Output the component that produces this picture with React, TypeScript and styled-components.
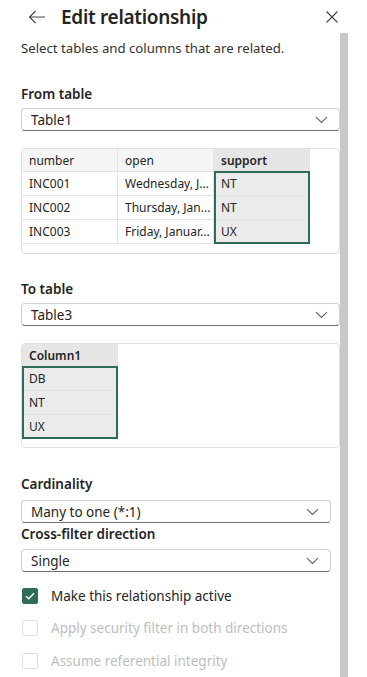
import styled, { createGlobalStyle } from 'styled-components';

const GlobalStyle = createGlobalStyle`
  html, body {
    margin: 0;
    background: #ffffff;
  }
  body {
    font-family: 'Noto Sans', 'Segoe UI', sans-serif;
    color: #242424;
  }
`;

const GREEN = '#2e6b59';

const Panel = styled.div`
  width: 367px;
  height: 677px;
  display: flex;
  flex-direction: column;
  overflow: hidden;
`;

const Header = styled.div`
  height: 33px;
  display: flex;
  align-items: center;
  padding: 0 29px 0 28px;
`;

const Title = styled.h1`
  flex: 1;
  margin: 0 0 0 15px;
  font-size: 19px;
  font-weight: 600;
  line-height: 26px;
  letter-spacing: -0.3px;
`;

const IconButton = styled.span`
  display: flex;
  align-items: center;
  color: #424242;
`;

const Main = styled.div`
  flex: 1;
  display: flex;
`;

const Content = styled.div`
  width: 319px;
  padding-left: 21px;
  display: flex;
  flex-direction: column;
`;

const Scrollbar = styled.div`
  width: 8px;
  background: #c8c8c8;
`;

const Description = styled.p`
  margin: 6px 0 0;
  font-size: 13.2px;
  line-height: 18px;
  color: #323232;
`;

const Label = styled.div<{ $top: number }>`
  margin-top: ${({ $top }) => $top}px;
  font-size: 13.5px;
  font-weight: 600;
  line-height: 18px;
`;

const Select = styled.div<{ $width?: number; $top?: number }>`
  box-sizing: border-box;
  width: ${({ $width }) => $width ?? 319}px;
  height: 23px;
  margin-top: ${({ $top }) => $top ?? 5}px;
  border: 1px solid #d1d1d1;
  border-bottom-color: #707070;
  border-radius: 4px;
  display: flex;
  align-items: center;
  justify-content: space-between;
  padding: 0 11px 0 9px;
  font-size: 13.5px;
  color: #242424;
`;

const Preview = styled.div<{ $top: number; $height: number }>`
  box-sizing: border-box;
  width: 319px;
  height: ${({ $height }) => $height}px;
  margin-top: ${({ $top }) => $top}px;
  border: 1px solid #e0e0e0;
  border-radius: 4px;
  display: flex;
  align-items: flex-start;
  overflow: hidden;
`;

const Column = styled.div`
  width: 96px;
  display: flex;
  flex-direction: column;
`;

const HeadCell = styled.div<{ $selected?: boolean }>`
  box-sizing: border-box;
  height: 22px;
  display: flex;
  align-items: center;
  padding-left: 7px;
  font-size: 12px;
  font-weight: ${({ $selected }) => ($selected ? 600 : 400)};
  background: ${({ $selected }) => ($selected ? '#e6e6e6' : '#f5f5f5')};
  border-right: 1px solid #e3e3e3;
  color: #242424;
`;

const CellGroup = styled.div<{ $selected?: boolean }>`
  position: relative;
  display: flex;
  flex-direction: column;
  background: ${({ $selected }) => ($selected ? '#ebebeb' : '#ffffff')};
  border-right: 1px solid #e3e3e3;

  &::after {
    content: '';
    display: ${({ $selected }) => ($selected ? 'block' : 'none')};
    position: absolute;
    inset: 0 -1px 0 0;
    border: 2px solid ${GREEN};
    pointer-events: none;
  }
`;

const Cell = styled.div`
  box-sizing: border-box;
  height: 24px;
  display: flex;
  align-items: center;
  padding-left: 7px;
  font-size: 12px;
  color: #242424;
  white-space: nowrap;
  overflow: hidden;
  border-top: 1px solid #e3e3e3;
  &:last-child {
    height: 25px;
    border-bottom: 1px solid #e3e3e3;
  }
`;

const CheckRow = styled.label<{ $disabled?: boolean; $top: number }>`
  display: flex;
  align-items: center;
  gap: 13px;
  height: 16px;
  margin-top: ${({ $top }) => $top}px;
  padding-left: 1px;
  font-size: 13.5px;
  color: ${({ $disabled }) => ($disabled ? '#bdbdbd' : '#242424')};
`;

const Box = styled.span<{ $checked?: boolean }>`
  box-sizing: border-box;
  width: 16px;
  height: 16px;
  border-radius: 2px;
  display: flex;
  align-items: center;
  justify-content: center;
  background: ${({ $checked }) => ($checked ? GREEN : '#ffffff')};
  border: 1px solid ${({ $checked }) => ($checked ? GREEN : '#e0e0e0')};
`;

function Chevron() {
  return (
    <svg width='13' height='8' viewBox='0 0 13 8' fill='none'>
      <path d='M1 1.2L6.5 6.5L12 1.2' stroke='#616161' strokeWidth='1.1' />
    </svg>
  );
}

type Col = { name: string; cells: string[]; selected?: boolean };

function DataPreview({ columns, top, height }: { columns: Col[]; top: number; height: number }) {
  return (
    <Preview $top={top} $height={height}>
      {columns.map((col) => (
        <Column key={col.name}>
          <HeadCell $selected={col.selected}>{col.name}</HeadCell>
          <CellGroup $selected={col.selected}>
            {col.cells.map((c, i) => (
              <Cell key={i}>{c}</Cell>
            ))}
          </CellGroup>
        </Column>
      ))}
    </Preview>
  );
}

const fromColumns: Col[] = [
  { name: 'number', cells: ['INC001', 'INC002', 'INC003'] },
  { name: 'open', cells: ['Wednesday, J...', 'Thursday, Jan...', 'Friday, Januar...'] },
  { name: 'support', cells: ['NT', 'NT', 'UX'], selected: true },
];

const toColumns: Col[] = [{ name: 'Column1', cells: ['DB', 'NT', 'UX'], selected: true }];

export default function App() {
  return (
    <Panel>
      <GlobalStyle />
      <Header>
        <IconButton>
          <svg width='18' height='14' viewBox='0 0 18 14' fill='none'>
            <path d='M17 7H1.5M7.5 1L1.5 7L7.5 13' stroke='#424242' strokeWidth='1.1' />
          </svg>
        </IconButton>
        <Title>Edit relationship</Title>
        <IconButton>
          <svg width='12' height='12' viewBox='0 0 12 12' fill='none'>
            <path d='M0.5 0.5L11.5 11.5M11.5 0.5L0.5 11.5' stroke='#424242' strokeWidth='1.1' />
          </svg>
        </IconButton>
      </Header>
      <Main>
        <Content>
          <Description>Select tables and columns that are related.</Description>
          <Label $top={28}>From table</Label>
          <Select>
            Table1
            <Chevron />
          </Select>
          <DataPreview columns={fromColumns} top={17} height={106} />
          <Label $top={26}>To table</Label>
          <Select>
            Table3
            <Chevron />
          </Select>
          <DataPreview columns={toColumns} top={17} height={105} />
          <Label $top={27}>Cardinality</Label>
          <Select $width={310} $top={7}>
            Many to one (*:1)
            <Chevron />
          </Select>
          <Label $top={2}>Cross-filter direction</Label>
          <Select $width={310} $top={6}>
            Single
            <Chevron />
          </Select>
          <CheckRow $top={16}>
            <Box $checked>
              <svg width='10' height='8' viewBox='0 0 10 8' fill='none'>
                <path d='M1 4.2L3.7 6.8L9 1.2' stroke='#ffffff' strokeWidth='1.5' />
              </svg>
            </Box>
            Make this relationship active
          </CheckRow>
          <CheckRow $top={16} $disabled>
            <Box />
            Apply security filter in both directions
          </CheckRow>
          <CheckRow $top={17} $disabled>
            <Box />
            Assume referential integrity
          </CheckRow>
        </Content>
        <Scrollbar />
      </Main>
    </Panel>
  );
}
